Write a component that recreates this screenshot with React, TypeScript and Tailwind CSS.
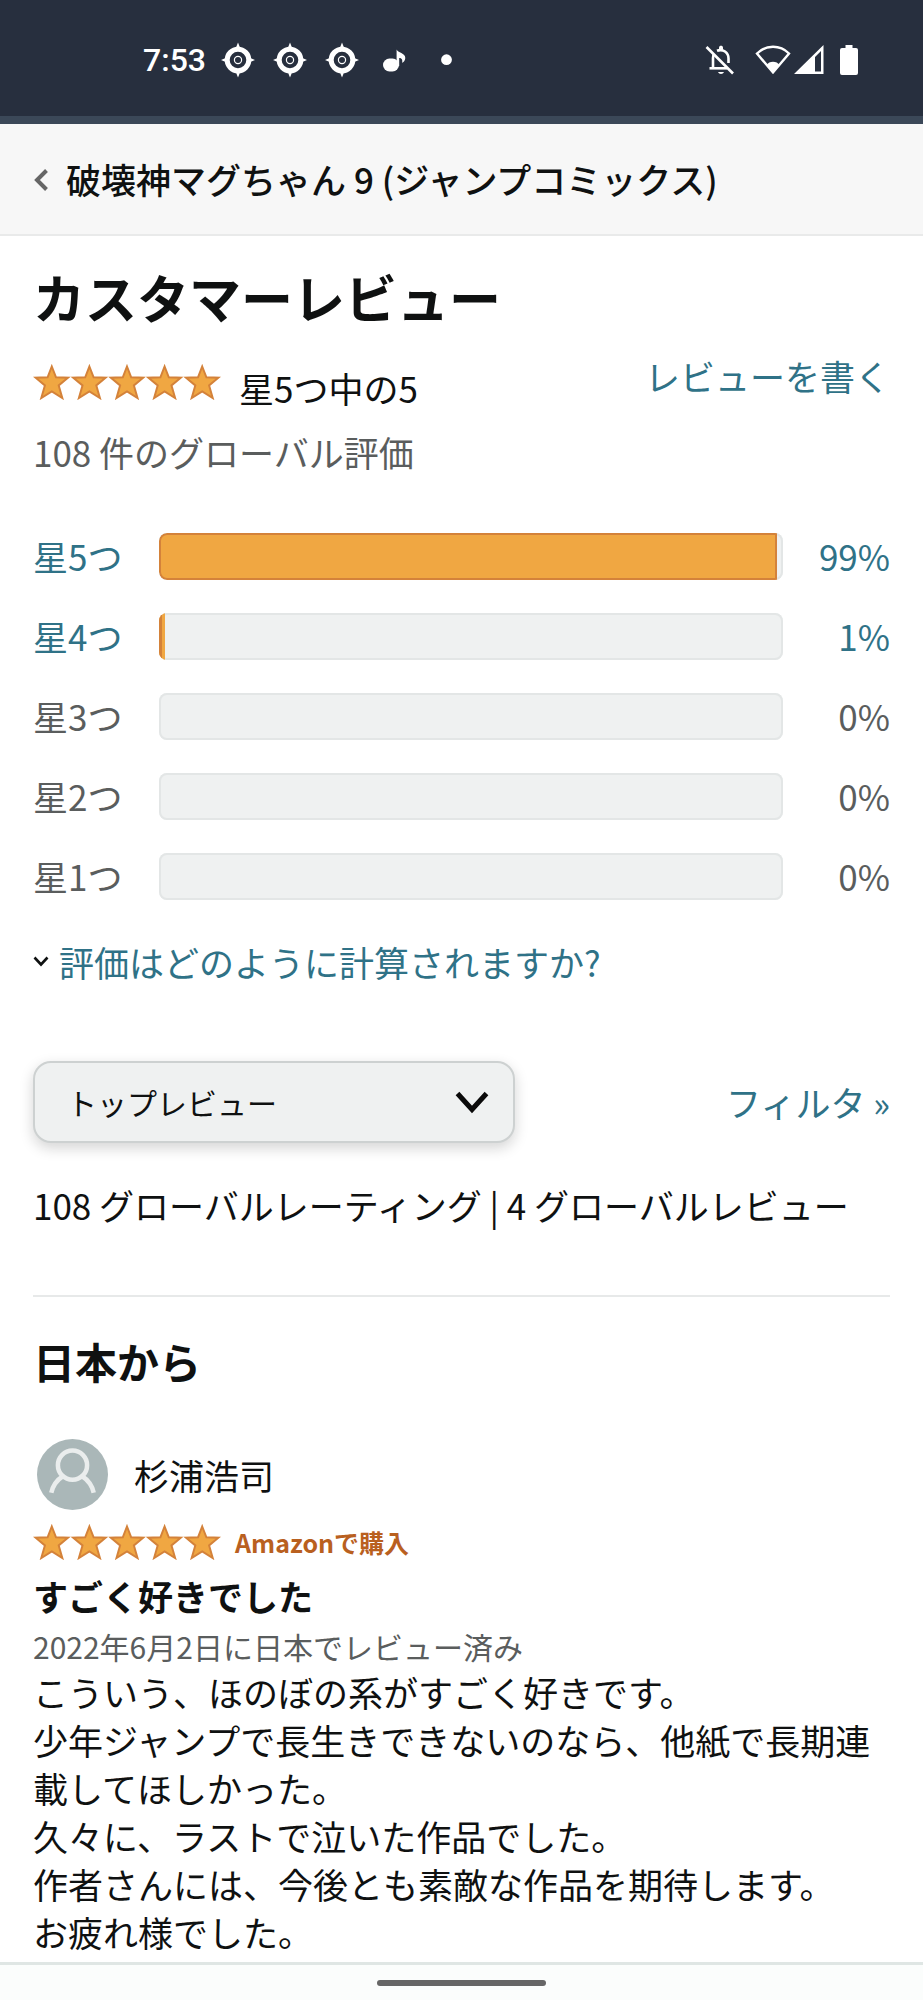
import { clsx } from 'clsx';

interface RatingRow {
  label: string;
  percent: number;
}

const ratings: RatingRow[] = [
  { label: '星5つ', percent: 99 },
  { label: '星4つ', percent: 1 },
  { label: '星3つ', percent: 0 },
  { label: '星2つ', percent: 0 },
  { label: '星1つ', percent: 0 },
];

const reviewLines = [
  'こういう、ほのぼの系がすごく好きです。',
  '少年ジャンプで長生きできないのなら、他紙で長期連載してほしかった。',
  '久々に、ラストで泣いた作品でした。',
  '作者さんには、今後とも素敵な作品を期待します。',
  'お疲れ様でした。',
];

function TargetIcon() {
  return (
    <svg viewBox="0 0 34 36" className="h-9 w-[34px]" fill="#fff">
      <path d="M17 0.5 L20 8 H14Z M17 35.5 L20 28 H14Z M0 18 L7 15 V21Z M34 18 L27 15 V21Z" />
      <circle cx="17" cy="18" r="10.8" fill="none" stroke="#fff" strokeWidth="5" />
      <circle cx="17" cy="18" r="3.6" fill="none" stroke="#fff" strokeWidth="1.2" />
    </svg>
  );
}

function StatusBar() {
  return (
    <div className="flex h-31 items-center justify-between border-b-8 border-[#3b4858] bg-[#272f3e] pt-1 pr-[65px] pl-[143px]">
      <div className="flex items-center">
        <span className="w-[78px] font-[Roboto] text-[32px] leading-9 font-medium text-white">7:53</span>
        <div className="flex items-center gap-[18px]">
          <TargetIcon />
          <TargetIcon />
          <TargetIcon />
          <svg viewBox="0 0 34 36" className="h-9 w-[34px]" fill="#fff">
            <rect x="6" y="16.5" width="16" height="13" rx="6.5" />
            <path d="M19.6 7.5 C20.5 10.5 28.5 11 28.3 16 C28.2 18.5 26.5 20.3 25 20.8 C26 18 24.5 16 22.2 16 V24 H19.6Z" />
          </svg>
          <svg viewBox="0 0 34 36" className="h-9 w-[34px]" fill="#fff">
            <circle cx="17.5" cy="17.7" r="5.4" />
          </svg>
        </div>
      </div>

      <div className="flex items-center">
        <svg viewBox="0 0 30 32" className="mr-5 h-8 w-[30px]" fill="none" stroke="#fff" strokeWidth="2.6">
          <path d="M1.5 3 L28 29.5" />
          <path d="M4.5 24.3 H22" />
          <path d="M8 24 V14 C8 12.5 8.3 11 9 10" />
          <path d="M12 6.8 C18 4.5 23.5 8.5 23.5 14.5 V19" />
          <path d="M13 28 H19 C18 30.6 14 30.6 13 28Z" fill="#fff" stroke="none" />
          <path d="M14 5 V3.5 C14 1.2 18 1.2 18 3.5 V6Z" fill="#fff" stroke="none" />
        </svg>
        <svg viewBox="0 0 36 32" className="h-8 w-9" fill="none" stroke="#fff" strokeWidth="2.4">
          <path d="M2 9.5 C11 0.5 25 0.5 34 9.5 L18 28.5Z" />
          <path d="M11.5 21 C14 16.5 22 16.5 24.5 21 L18 29Z" fill="#fff" stroke="none" />
        </svg>
        <svg viewBox="0 0 30 32" className="ml-[3px] h-8 w-[30px]" fill="#fff">
          <path fillRule="evenodd" d="M0 30 L29.5 1 V30Z M21 13 V27.5 H27 V7Z" />
        </svg>
        <svg viewBox="0 0 18 32" className="ml-4 h-8 w-[18px]" fill="#fff">
          <path d="M5.5 1 H12.5 V4 H16 Q18 4 18 6 V29 Q18 31 16 31 H2 Q0 31 0 29 V6 Q0 4 2 4 H5.5Z" />
        </svg>
      </div>
    </div>
  );
}

function Stars() {
  return (
    <svg viewBox="0 0 188 36" className="h-9 w-[188px] shrink-0" role="img" aria-label="星5つ中の5">
      {[0, 1, 2, 3, 4].map((i) => (
        <path
          key={i}
          transform={`translate(${i * 37.6} 0)`}
          d="M18.8 2.5 L23 13.3 L35 13.7 L25.7 21.4 L29.3 34 L18.8 27.4 L8.3 34 L11.9 21.4 L2.6 13.7 L14.6 13.3Z"
          fill="#f0a742"
          stroke="#d4823a"
          strokeWidth="2"
        />
      ))}
    </svg>
  );
}

function RatingTable() {
  return (
    <table className="mt-10 w-full">
      <tbody>
        {ratings.map(({ label, percent }) => {
          const color = percent > 0 ? 'text-[#2f7287]' : 'text-[#5a5d5d]';
          return (
            <tr key={label} className={clsx('h-20', color)}>
              <th scope="row" className="w-[126px] p-0 text-left font-normal">
                {percent > 0 ? <a href="#reviews">{label}</a> : label}
              </th>
              <td className="p-0">
                <div className="h-[47px] overflow-hidden rounded-lg bg-[#eff1f1] shadow-[inset_0_0_0_2px_#e3e6e6]">
                  {percent > 0 && (
                    <div
                      className={clsx(
                        'h-full border-[#d4823a] bg-[#f0a742]',
                        percent > 50 ? 'rounded-l-lg border-2' : 'border-l-3',
                      )}
                      style={{ width: `${percent}%` }}
                    />
                  )}
                </div>
              </td>
              <td className="w-[107px] p-0 text-right">
                {percent > 0 ? <a href="#reviews">{percent}%</a> : `${percent}%`}
              </td>
            </tr>
          );
        })}
      </tbody>
    </table>
  );
}

function Review() {
  return (
    <article>
      <div className="mt-[54px] flex items-center gap-[26px] pl-1">
        <svg viewBox="0 0 72 72" className="size-[71px]">
          <circle cx="36" cy="36" r="36" fill="#aab7b8" />
          <g fill="none" stroke="#eaeded" strokeWidth="4.6">
            <circle cx="36" cy="26.5" r="14.8" />
            <path d="M14.5 54.5 C16 47.5 19.5 42 26.5 37.5 M57.5 54.5 C56 47.5 52.5 42 45.5 37.5" />
          </g>
        </svg>
        <span>杉浦浩司</span>
      </div>
      <div className="mt-3.5 flex items-center gap-3.5">
        <Stars />
        <a href="#purchase" className="text-[25px] leading-9 font-bold text-[#b9601f]">
          Amazonで購入
        </a>
      </div>
      <h3 className="mt-3 font-bold">すごく好きでした</h3>
      <p className="mt-1 text-[30px] leading-11 text-[#5a5d5d]">2022年6月2日に日本でレビュー済み</p>
      {reviewLines.map((line) => (
        <p key={line}>{line}</p>
      ))}
    </article>
  );
}

export default function App() {
  return (
    <div
      lang="ja"
      className="flex min-h-screen flex-col bg-white font-['Noto_Sans_CJK_JP',sans-serif] text-[35px] leading-12 text-[#0f1111]"
    >
      <StatusBar />

      {/* Product title */}
      <header className="flex h-28 items-center border-b-2 border-[#e9eaea] bg-[#f7f7f7] px-8">
        <a href="#product" className="flex items-center gap-4 font-medium">
          <svg viewBox="0 0 18 24" className="h-6 w-[18px]" fill="none" stroke="#666" strokeWidth="4">
            <path d="M14.5 3.5 L5 13 L14.5 22.5" />
          </svg>
          破壊神マグちゃん 9 (ジャンプコミックス)
        </a>
      </header>

      <main id="reviews" className="px-[33px]">
        <h1 className="mt-[26px] text-[52px] leading-[70px] font-bold">カスタマーレビュー</h1>

        {/* Average rating */}
        <div className="mt-5 flex items-start justify-between">
          <div className="flex items-start gap-[18px] pt-3">
            <Stars />
            <span>星5つ中の5</span>
          </div>
          <a href="#write" className="text-[#2f7287]">
            レビューを書く
          </a>
        </div>
        <p className="mt-4 text-[#5a5d5d]">108 件のグローバル評価</p>

        <RatingTable />

        <button type="button" className="mt-[22px] flex items-center gap-2.5 text-[#2f7287]">
          <svg viewBox="0 0 16 12" className="h-3 w-4" fill="none" stroke="#0f1111" strokeWidth="2.6">
            <path d="M1.5 1.5 L8 8.5 L14.5 1.5" />
          </svg>
          評価はどのように計算されますか?
        </button>

        {/* Sort and filter */}
        <div className="mt-[75px] flex items-center justify-between">
          <div className="relative">
            <select
              aria-label="並べ替え"
              className="h-[82px] w-[482px] appearance-none rounded-[18px] border-2 border-[#cdd1d1] bg-[#eff1f1] pl-8 text-[30px] shadow-[0_5px_14px_rgba(15,17,17,0.18)]"
            >
              <option>トップレビュー</option>
            </select>
            <svg
              viewBox="0 0 34 24"
              className="pointer-events-none absolute top-[30px] right-[26px] h-6 w-[34px]"
              fill="none"
              stroke="#0a0a0a"
              strokeWidth="5"
            >
              <path d="M2.5 2.5 L17 18.5 L31.5 2.5" />
            </svg>
          </div>
          <a href="#filter" className="text-[#2f7287]">
            フィルタ »
          </a>
        </div>

        <p className="mt-[38px]">108 グローバルレーティング | 4 グローバルレビュー</p>
        <hr className="mt-[66px] border-t-2 border-[#e7e9e9]" />

        <h2 className="mt-10 text-[42px] font-bold">日本から</h2>
        <Review />
      </main>

      {/* Gesture bar */}
      <footer className="mt-auto flex h-[38px] items-center justify-center border-t-3 border-[#dfe6e4] bg-[#fbfdfc]">
        <div className="h-1.5 w-[169px] rounded-full bg-[#666]" />
      </footer>
    </div>
  );
}
